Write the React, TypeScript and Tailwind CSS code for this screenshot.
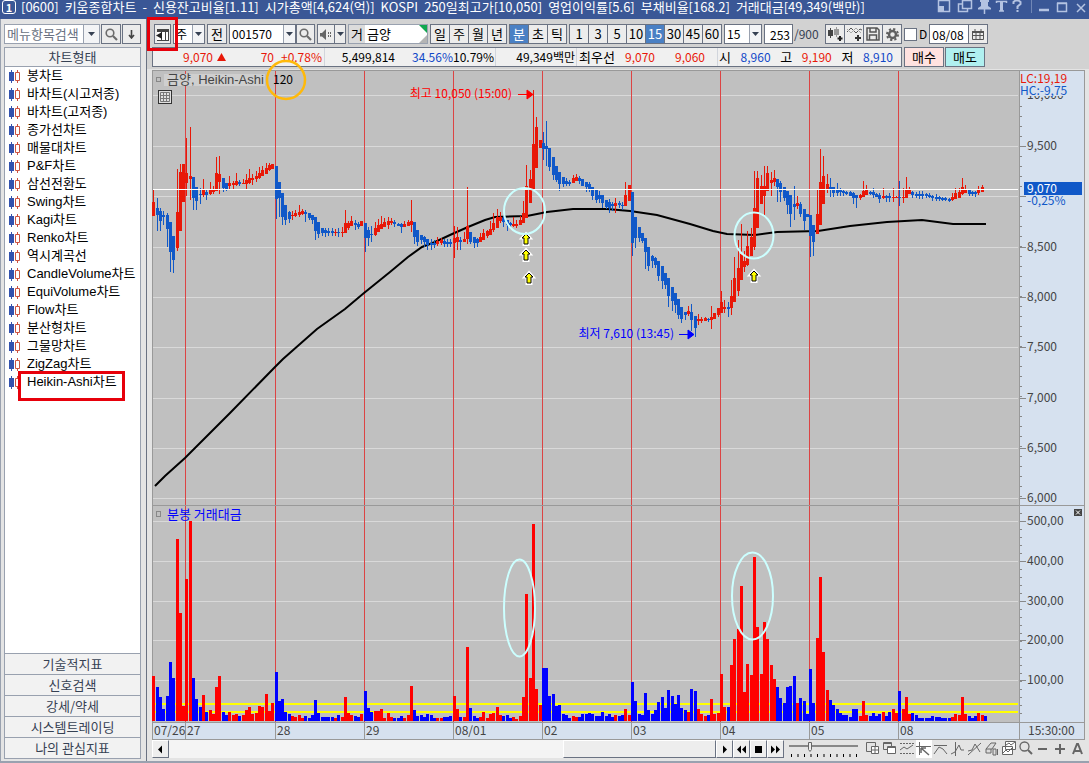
import { useState } from 'react'
import type { ReactNode } from 'react'

const TITLE_PARTS = [
  '[0600]', '키움종합차트', '-', '신용잔고비율[1.11]', '시가총액[4,624(억)]', 'KOSPI',
  '250일최고가[10,050]', '영업이익률[5.6]', '부채비율[168.2]', '거래대금[49,349(백만)]',
]

const CHART_TYPES = [
  '봉차트', '바차트(시고저종)', '바차트(고저종)', '종가선차트', '매물대차트', 'P&F차트',
  '삼선전환도', 'Swing차트', 'Kagi차트', 'Renko차트', '역시계곡선', 'CandleVolume차트',
  'EquiVolume차트', 'Flow차트', '분산형차트', '그물망차트', 'ZigZag차트', 'Heikin-Ashi차트',
]

const SIDE_TABS = ['기술적지표', '신호검색', '강세/약세', '시스템트레이딩', '나의 관심지표']

const DAYS = [
  { x: 185, label: '27' },
  { x: 275, label: '28' },
  { x: 364, label: '29' },
  { x: 453, label: '08/01' },
  { x: 542, label: '02' },
  { x: 631, label: '03' },
  { x: 720, label: '04' },
  { x: 809, label: '05' },
  { x: 898, label: '08' },
]

const PRICE_GRID = [
  { y: 95, label: '10,000' },
  { y: 146, label: '9,500' },
  { y: 196, label: '' },
  { y: 247, label: '8,500' },
  { y: 297, label: '8,000' },
  { y: 347, label: '7,500' },
  { y: 398, label: '7,000' },
  { y: 448, label: '6,500' },
  { y: 498, label: '6,000' },
]

const VOLUME_GRID = [
  { y: 521, label: '500,00' },
  { y: 561, label: '400,00' },
  { y: 601, label: '300,00' },
  { y: 640, label: '200,00' },
  { y: 680, label: '100,00' },
]

// colour, high, body top, body bottom, low
const CANDLES = `
r190,202,216,216 b198,208,215,231 b208,211,221,231 b211,215,217,225 b213,215,229,247 b222,222,252,272
b236,236,260,273 r169,212,248,251 r164,172,231,231 r164,164,202,202 r138,173,183,196 r127,176,179,200
b177,177,198,210 b187,187,201,210 b188,194,195,204 r179,190,195,197 b190,192,195,200 r182,190,194,195
r186,189,192,194 r157,173,191,191 r156,174,182,194 b178,178,188,192 b183,183,189,191 r176,183,186,189
r181,183,185,189 r173,181,185,186 b180,182,184,186 r179,183,184,184 r174,180,184,189 r169,178,183,184
r174,178,180,185 r171,176,179,182 r167,173,178,179 r166,170,176,176 r163,168,174,174 r163,165,170,171
r164,164,169,169 b166,166,199,219 b182,182,198,217 b193,193,217,225 b205,205,220,225 b211,212,219,223
r211,215,216,220 r210,213,216,217 r205,212,215,217 r209,211,214,215 b210,212,214,222 b213,213,218,220
b215,215,220,224 b217,217,231,240 b222,222,234,238 b228,228,233,236 b228,230,233,237 b228,231,233,236
b228,231,233,236 r229,232,233,236 b228,232,233,237 r227,232,233,237 r210,223,233,233 r221,223,228,230
r216,221,226,226 b220,223,225,230 b222,224,227,229 r221,221,226,226 b223,223,238,252 b227,230,238,246
b226,234,235,242 r222,228,235,236 r219,225,232,232 r216,224,229,229 r218,222,227,227 r217,221,225,229
r218,221,223,225 b220,222,224,227 b223,224,226,226 b223,224,227,233 r221,224,227,227 r220,222,226,226
r200,221,225,232 b222,222,237,244 b230,230,242,246 b235,235,240,244 b236,237,242,247 b239,239,245,250
b239,243,245,250 b240,243,245,248 r237,241,244,246 r238,240,243,245 b239,241,244,247 b239,242,244,247
b239,242,244,247 r226,238,243,258 r227,237,242,250 b237,240,242,250 r232,239,242,242 r187,226,239,244
b232,232,242,244 b237,237,243,248 b238,239,243,247 r233,237,242,242 r229,233,240,240 r230,231,236,238
r221,229,235,235 r213,223,230,232 r209,217,228,228 r212,217,221,223 b216,218,222,227 b220,220,225,231
b222,223,225,229 r217,224,226,227 r220,224,226,228 r216,220,225,225 r201,213,223,223 r165,186,218,218
r170,179,203,203 r90,144,191,191 r117,127,168,168 r140,140,148,148 b132,143,149,160 b121,146,149,166
b148,148,167,171 b157,157,175,180 b166,166,180,182 b172,172,184,191 b177,177,184,187 b178,181,184,186
b180,182,184,186 r175,178,183,183 r174,177,181,181 b176,178,181,184 b179,179,186,186 b182,182,187,192
b182,184,189,192 b187,187,196,200 b190,190,200,203 b191,195,199,203 b195,195,203,208 b200,200,207,209
b199,202,208,213 b202,204,206,211 r198,203,206,213 b201,203,205,208 b202,205,206,210 r182,195,206,206
r185,185,201,201 b192,192,243,256 b217,217,238,248 b227,227,238,242 b233,233,241,243 b238,238,252,269
b247,247,266,271 b255,256,261,268 b257,258,265,268 b261,261,276,281 b266,266,281,289 b273,273,285,289
b278,278,296,307 b287,287,301,311 b293,293,305,313 b299,299,315,319 b307,307,319,323 b312,312,315,320
r306,311,314,316 b304,312,320,331 b316,316,328,337 r314,319,321,325 r317,319,321,323 r317,318,321,321
b318,319,320,322 r306,317,320,329 r313,313,319,319 r308,308,315,317 r291,302,313,313 r300,307,309,313
b302,307,309,317 r280,296,308,315 r257,278,302,302 r240,268,291,296 r224,254,280,280 r251,261,267,272
r231,246,265,266 r228,237,256,256 r171,208,247,250 r171,178,228,228 r175,186,204,204 r166,186,196,215
r166,173,191,191 r172,180,183,196 r170,178,182,186 b179,179,187,202 b181,183,192,202 b187,187,198,201
b191,191,205,214 b195,195,214,227 b186,204,207,220 r196,203,206,209 b202,204,214,217 b209,209,221,230
b214,214,217,217 b215,215,236,257 b225,225,242,256 r190,214,234,234 r149,182,225,225 r156,176,204,204
r174,184,189,193 b178,187,189,197 b187,187,193,197 b183,190,193,196 b188,190,192,196 b190,191,193,196
b191,192,194,195 b191,192,196,196 b192,193,198,204 b195,195,198,208 r194,195,198,200 r181,191,197,197
r185,190,195,195 b191,192,194,195 b188,192,195,198 b193,194,197,197 b193,195,199,203 r188,196,198,199
b195,196,198,202 b193,196,198,202 r188,197,198,202 r196,197,198,198 b181,197,198,206 r188,197,198,203
r177,189,198,198 r187,190,194,194 b191,192,195,198 b192,194,196,198 b191,194,196,199 b191,194,196,199
b193,194,196,198 b193,195,197,198 b195,196,198,201 b194,197,199,201 b196,197,199,201 b197,198,200,201
b197,198,200,201 b198,199,201,202 r193,197,200,201 r188,193,199,199 r188,192,198,198 r178,187,194,195
r185,189,193,193 b190,190,194,196 b191,192,194,196 b191,192,194,197 r186,190,193,195 r185,187,192,192
`.trim().split(/\s+/)

// colour, bar height
const VOLUMES = `
r45 b34 b24 b12 b25 b59 b43 r182 r108 r15 r142 r200 b43 b22 b14 r26 b9 r11 r7 r34 r45 b9 b6 r9 r6 r7 b5
r6 r11 r14 r7 r8 r15 r14 r27 r10 r18 b49 b20 b22 b9 b7 r5 r4 r6 r3 b5 b3 b6 b21 b8 b4 b4 b4 b4 r3 b6 r4
r24 r8 r6 b5 b4 r7 b30 b13 b9 r10 r10 r12 r3 r8 r4 b3 b3 b5 r3 r6 r35 b11 b5 b6 b4 b7 b6 b3 r3 r3 b4 b4
b5 r25 r12 b4 r4 r74 b13 b5 b3 r4 r9 r3 r7 r8 r14 r6 b5 b6 b3 r4 r2 r5 r24 r127 r43 r197 r32 r16 b53 b53
b25 b27 b15 b16 b7 b6 b3 r5 r4 b4 b7 b7 b8 b7 b5 b5 b9 b5 b7 b4 r6 b5 b6 r12 r6 b39 b20 b7 b6 b28 b11 b7
b11 b19 b24 b13 b31 b25 b17 b26 b13 b11 r9 b32 b30 r12 r7 r5 b6 r22 r7 r8 r47 r14 b14 r56 r82 r92 r135
r29 r57 r46 r164 r94 r47 r99 r82 r56 r42 b34 b23 b18 b34 b35 b45 r18 b23 b20 b7 b52 b18 r83 r144 r69 r31
b21 b16 b12 b8 b6 b6 b4 b12 b12 r5 r20 r6 b5 b8 b5 b7 r9 b5 b9 r12 r8 b30 r12 r24 r7 b8 b6 b3 b3 b3 b3
b5 b4 b4 b3 b3 b3 r4 r7 r6 r24 r7 b5 b3 b5 r8 r6 b5
`.trim().split(/\s+/)

const AVERAGE =
  '155,486 165,476 185,458 230,413 275,367 283,359 317,329 345,309 364,293 390,272 408,257 422,247 435,242 450,235 468,227 485,220 495,217 527,216 547,212 573,209 607,209 630,211 657,215 690,224 713,231 727,234 755,235 777,232 818,231 850,226 887,222 922,220 953,224 986,224'

const barX = (i: number) => Math.floor(152.95 + 3.3 * i)

const range = (from: number, to: number, step: number) => {
  const out: number[] = []
  for (let v = from; v <= to; v += step) out.push(v)
  return out
}

function Caret() {
  return (
    <svg width="7" height="4" viewBox="0 0 7 4" className="fill-gray-700">
      <path d="M0 0h7L3.5 4z" />
    </svg>
  )
}

function Combo({ label, value, className }: { label: string; value: string; className: string }) {
  return (
    <div className={`flex h-5 border border-gray-500 bg-white text-[12px] ${className}`}>
      <select aria-label={label} className="min-w-0 flex-1 appearance-none px-[2px] outline-none">
        <option>{value}</option>
      </select>
      <span className="pointer-events-none flex w-3 shrink-0 items-center justify-center border-l border-gray-400 bg-gray-100">
        <Caret />
      </span>
    </div>
  )
}

function ToolButton({ label, className = 'w-5', children }: { label: string; className?: string; children: ReactNode }) {
  return (
    <button
      aria-label={label}
      className={`flex h-5 shrink-0 items-center justify-center border border-gray-500 bg-[#ececec] ${className}`}
    >
      {children}
    </button>
  )
}

function Segments({ items, active, onPick }: { items: string[]; active: string; onPick: (v: string) => void }) {
  return (
    <div className="flex h-5 shrink-0 border-y border-r border-gray-500">
      {items.map((item) => (
        <button
          key={item}
          onClick={() => onPick(item)}
          className={`w-[19px] border-l border-gray-500 text-center ${item === active ? 'bg-[#4a80c4] text-white' : 'bg-[#ececec]'}`}
        >
          {item}
        </button>
      ))}
    </div>
  )
}

function SearchIcon() {
  return (
    <svg width="13" height="13" viewBox="0 0 13 13" fill="none" stroke="#6b6b6b" strokeWidth="1.6">
      <circle cx="5" cy="5" r="3.8" />
      <path d="M8 8l4 4" strokeWidth="2.2" />
    </svg>
  )
}

function TitleBar() {
  return (
    <header className="flex h-[19px] items-start bg-[#3a5796] pl-[2px] text-white">
      <span className="mr-1 flex h-[14px] w-[14px] shrink-0 items-center justify-center rounded-[3px] border border-white text-[11px] font-bold leading-none">
        1
      </span>
      <h1 className="ml-[1px] flex flex-1 gap-[6px] whitespace-nowrap text-[13px] leading-[14px]">
        {TITLE_PARTS.map((part) => (
          <span key={part}>{part}</span>
        ))}
      </h1>
      <svg width="152" height="16" viewBox="937 0 152 16" fill="none" stroke="#b4c3e2" strokeWidth="1.5" className="shrink-0">
        <path d="M938.500 0.500h11v11h-11z M942 5" />
        <path d="M938 6h6v6h-6z" fill="#b4c3e2" stroke="none" />
        <path d="M962.500 0.500h9v8h-9z M962 4h-3.500v7.500h9v-3" />
        <path d="M980 0h9v2h-1v4l3 2v1.500h-13V8l3-2V2h-1z" fill="#b4c3e2" stroke="none" />
        <path d="M984.500 9v5 M996.500 3V1.500h10V3 M1001.500 1v10 M999 11h5" />
        <path d="M1001.500 1v10" strokeWidth="3" />
        <path d="M1013.500 4V2l2-1.500h3l2 1.500v2l-3 2.500V9 M1017.500 10v2" strokeWidth="2" />
        <path d="M1031.500 0v13" stroke="#7187b6" strokeWidth="1" />
        <path d="M1039 10h10" strokeWidth="2.500" />
        <path d="M1057.500 3.500h9v8h-9z M1057 3h10" />
        <path d="M1077 4l8 8M1085 4l-8 8" />
      </svg>
    </header>
  )
}

function Sidebar() {
  const [selected, setSelected] = useState('Heikin-Ashi차트')
  return (
    <aside className="flex w-[147px] shrink-0 flex-col border-l border-r border-l-gray-400 border-r-gray-500 bg-[#e4e4e4] pb-[2px] pl-[3px] pr-[5px] pt-[5px]">
      <div className="flex h-5 justify-between">
        <div className="flex w-24 border border-gray-400 bg-white">
          <input
            aria-label="메뉴항목검색"
            placeholder="메뉴항목검색"
            className="w-20 min-w-0 pl-[2px] text-[13px] outline-none placeholder:text-gray-500"
          />
          <span className="flex w-4 shrink-0 items-center justify-center border-l border-gray-400 bg-gray-100">
            <Caret />
          </span>
        </div>
        <ToolButton label="검색">
          <SearchIcon />
        </ToolButton>
        <ToolButton label="아래로" className="w-[19px]">
          <svg width="7" height="9" viewBox="0 0 7 9" fill="none" stroke="#444" strokeWidth="1.6">
            <path d="M3.500 0v8M1 5l2.500 3L6 5" />
          </svg>
        </ToolButton>
      </div>

      <div className="mt-[3px] flex flex-1 flex-col border border-gray-400 bg-white">
        <h2 className="h-[19px] border-b border-gray-400 bg-[#f2f2f2] text-center text-[13px] leading-[18px] text-gray-700">
          차트형태
        </h2>
        <ul>
          {CHART_TYPES.map((name) => (
            <li key={name} className="relative h-[18px]">
              <button onClick={() => setSelected(name)} className="flex w-full items-center gap-[6px] whitespace-nowrap pl-1 text-left text-[13px] leading-[18px]">
                <svg width="12" height="13" viewBox="0 0 12 13" className="shrink-0">
                  <path d="M0 2h2V0h1v2h2v9H3v2H2v-2H0z" fill="#3352ae" />
                  <path d="M6.500 2.500h4v8h-4z M8.500 0v2.500 M8.500 10.500V13" fill="none" stroke="#cc5240" />
                </svg>
                <span className="font-['Liberation_Sans','Noto_Sans_CJK_KR',sans-serif]">{name}</span>
              </button>
              {name === selected && (
                <span className="pointer-events-none absolute -top-[2px] left-[13px] h-[30px] w-[107px] border-[3px] border-red-600" />
              )}
            </li>
          ))}
        </ul>
      </div>
      {SIDE_TABS.map((tab) => (
        <button key={tab} className="h-[21px] border border-t-0 border-gray-400 bg-[#f2f2f2] text-[13px] leading-5 text-gray-700">
          {tab}
        </button>
      ))}
    </aside>
  )
}

function Toolbar() {
  const [period, setPeriod] = useState('분')
  const [minutes, setMinutes] = useState('15')
  return (
    <div className="flex h-5 items-center gap-[2px] whitespace-nowrap text-[13px] leading-[18px]">
      <div className="relative ml-[2px]">
        <ToolButton label="메뉴 접기" className="w-[17px]">
          <svg width="13" height="13" viewBox="0 0 13 13" className="shrink-0">
            <path d="M1 1h12v12H1z" fill="#444" />
            <path d="M6 4h3v8H6z M10 4h2v8h-2z M1 4h4v8H1z" fill="#fff" />
            <path d="M6 4v7L0 7.500z" fill="#222" />
          </svg>
        </ToolButton>
        <span className="pointer-events-none absolute -inset-[7px] z-10 border-[3px] border-red-600" />
      </div>
      <Combo label="종목구분" value="주" className="w-8" />
      <ToolButton label="전">전</ToolButton>
      <Combo label="종목코드" value="001570" className="w-[67px]" />
      <ToolButton label="종목검색" className="-ml-[2px] w-[19px]">
        <SearchIcon />
      </ToolButton>
      <div className="flex">
        <ToolButton label="소리" className="w-[18px]">
          <svg width="13" height="11" viewBox="0 0 13 11" fill="#666">
            <path d="M0 4h2l4-4v11L2 7.500H0z M8 3h1v2H8z M8 6h1v2H8z M10 3h1v2h-1z M10 6h1v2h-1z" />
          </svg>
        </ToolButton>
        <ToolButton label="소리 설정" className="-ml-px w-[12px]">
          <Caret />
        </ToolButton>
      </div>
      <div className="flex h-5 w-20 border border-gray-400 bg-white">
        <button className="w-4 bg-[#dcdcdc]">거</button>
        <input aria-label="종목명" defaultValue="금양" className="w-10 min-w-0 flex-1 px-[2px] outline-none" />
        <svg width="8" height="18" viewBox="0 0 8 18" className="shrink-0">
          <path d="M0 0h8v8z" fill="#10a850" />
          <path d="M8 10v8H0z" fill="#b4b4b4" />
        </svg>
      </div>
      <Segments items={['일', '주', '월', '년']} active={period} onPick={setPeriod} />
      <Segments items={['분', '초', '틱']} active={period} onPick={setPeriod} />
      <Segments items={['1', '3', '5', '10', '15', '30', '45', '60']} active={minutes} onPick={setMinutes} />
      <Combo label="주기" value="15" className="w-[38px]" />
      <label className="flex items-center text-[12px]">
        <input aria-label="조회개수" defaultValue="253" className="h-5 w-[29px] border border-gray-500 bg-white pr-[2px] text-right outline-none" />
        <span className="w-[30px] pl-px text-gray-700">/900</span>
      </label>
      <div className="flex">
        <ToolButton label="봉 추가">
          <svg width="15" height="15" viewBox="0 0 15 15">
            <path d="M0 3h2V1h1v2h2v6H3v2H2V9H0z" fill="#444" />
            <path d="M6 2h2V0h1v2h2v6H9v2H8V8H6z" fill="#999" />
            <path d="M12 9v5M9.500 11.500h5" stroke="#222" strokeWidth="2" />
          </svg>
        </ToolButton>
        <ToolButton label="지표 추가" className="-ml-px w-5">
          <svg width="15" height="15" viewBox="0 0 15 15" fill="none">
            <path d="M0 5l4-4 5 5 4-4 2 1" stroke="#555" />
            <path d="M0 2l4 4 5-5 5 5" stroke="#aaa" />
            <path d="M11 8v6M8 11h6" stroke="#333" strokeWidth="2" />
          </svg>
        </ToolButton>
        <ToolButton label="저장" className="-ml-px w-5">
          <svg width="14" height="14" viewBox="0 0 14 14" fill="none" stroke="#555" strokeWidth="1.500">
            <path d="M1 1h10l2 2v10H1z M4 1v4h6V1 M3.500 13V8h7v5" />
          </svg>
        </ToolButton>
        <ToolButton label="설정" className="-ml-px w-5">
          <svg width="13" height="13" viewBox="0 0 13 13" fill="none" stroke="#606060">
            <circle cx="6.500" cy="6.500" r="3.500" strokeWidth="2.500" />
            <circle cx="6.500" cy="6.500" r="5.500" strokeWidth="2" strokeDasharray="2.200 2.120" />
          </svg>
        </ToolButton>
      </div>
      <label className="flex items-center gap-[2px] text-[12px]">
        <input type="checkbox" className="h-[13px] w-[13px] appearance-none border border-gray-500 bg-white" />D
      </label>
      <div className="flex text-[12px]">
        <input aria-label="날짜" defaultValue="08/08" className="h-5 w-10 border border-gray-500 bg-white px-[2px] outline-none" />
        <ToolButton label="달력" className="-ml-px w-5">
          <svg width="12" height="11" viewBox="0 0 12 11" fill="none" stroke="#555">
            <path d="M0.500 2.500h11v8H0.500z M4 2v9 M8 2v9 M0 6.500h12 M3 0v2 M9 0v2" />
            <path d="M0 3h12" strokeWidth="2" />
          </svg>
        </ToolButton>
      </div>
    </div>
  )
}

function QuoteRow() {
  return (
    <div className="mt-[3px] flex h-5 whitespace-nowrap text-[12px] leading-[18px]">
      <div className="flex w-[750px] border border-gray-500 bg-[#f0f0f0] text-right">
        <div className="flex w-[172px] items-center border-r border-gray-300 pr-[2px] text-[#e81808]">
          <span className="w-[60px]">9,070</span>
          <svg width="9" height="8" viewBox="0 0 9 8" className="ml-1 fill-[#e81808]">
            <path d="M4.500 0L9 8H0z" />
          </svg>
          <span className="ml-auto">70</span>
          <span className="w-12">+0.78%</span>
        </div>
        <div className="flex w-[171px] border-r border-gray-300 pr-[2px]">
          <span className="w-[70px]">5,499,814</span>
          <span className="w-[58px] text-[#1048c8]">34.56%</span>
          <span className="w-10">10.79%</span>
        </div>
        <span className="w-[81px] border-r border-gray-300 pr-[1px]">49,349백만</span>
        <div className="flex w-[141px] border-r border-gray-300 pl-[2px] text-[#e81808]">
          <span className="w-9 text-left text-[13px] text-black">최우선</span>
          <span className="w-10">9,070</span>
          <span className="w-[50px]">9,060</span>
        </div>
        <div className="flex flex-1 justify-between pl-[1px] pr-2 text-[#1048c8]">
          <span className="text-[13px] text-black">시</span>
          <span>8,960</span>
          <span className="text-[13px] text-black">고</span>
          <span className="text-[#e81808]">9,190</span>
          <span className="text-[13px] text-black">저</span>
          <span>8,910</span>
        </div>
      </div>
      <button className="ml-[2px] w-10 border border-gray-500 bg-[#ffe2e0] text-[13px]">매수</button>
      <button className="ml-[1px] w-10 border border-gray-500 bg-[#b0f0f0] text-[13px]">매도</button>
    </div>
  )
}

function BuyArrow({ x, y }: { x: number; y: number }) {
  return (
    <g transform={`translate(${x} ${y})`}>
      <path d="M0 -6L5 -0.500H2.500V6H-2.500V-0.500H-5z" fill="#ff0" stroke="#fff" strokeWidth="2" />
      <path d="M0 -5L4 -1H2V5H-2V-1H-4z" fill="#ff0" stroke="#000" />
    </g>
  )
}

function Chart() {
  return (
    <svg viewBox="152 70 934 670" className="relative block w-full overflow-visible text-[12px]">
      <g shapeRendering="crispEdges">
        <rect x="152" y="70" width="933" height="670" fill="#999" />
        <rect x="153" y="71" width="866" height="651" fill="#c0c0c0" />
        <rect x="1020" y="71" width="64" height="651" fill="#d6e1ef" />
        <rect x="153" y="723" width="931" height="16" fill="#d6e1ef" />
        <rect x="1019" y="723" width="1" height="17" fill="#999" />

        {/* grid */}
        {[...PRICE_GRID, ...VOLUME_GRID].map((g) => (
          <g key={g.y}>
            <rect x="153" y={g.y} width="865" height="1" fill="#d9d9d9" />
            <rect x="1020" y={g.y} width="6" height="1" fill="#888" />
          </g>
        ))}
        {range(106, 498, 10).map((y) => (
          <rect key={y} x="1020" y={y} width="2" height="1" fill="#888" />
        ))}
        {range(513, 720, 8).map((y) => (
          <rect key={y} x="1020" y={y} width="2" height="1" fill="#888" />
        ))}
        <rect x="153" y="703" width="865" height="2" fill="#ff0" />
        <rect x="153" y="711" width="865" height="2" fill="#ff0" />
        {DAYS.map((d) => (
          <g key={d.x}>
            <rect x={d.x} y="71" width="1" height="651" fill="#dc4444" />
            <rect x={d.x} y="722" width="1" height="17" fill="#999" />
          </g>
        ))}
        <rect x="153" y="505" width="931" height="1" fill="#999" />
      </g>

      <polyline points={AVERAGE} fill="none" stroke="#000" strokeWidth="2" />

      <g shapeRendering="crispEdges">
        {CANDLES.map((c, i) => {
          const [high, top, bottom, low] = c.slice(1).split(',').map(Number)
          return (
            <g key={i} fill={c[0] === 'r' ? '#e81808' : '#1058c8'}>
              <rect x={barX(i) + 1} y={high} width="1" height={low - high} />
              <rect x={barX(i)} y={top} width="3" height={Math.max(1, bottom - top)} />
            </g>
          )
        })}
        <rect x="153" y="189" width="865" height="1" fill="#fff" />
        {VOLUMES.map((v, i) => (
          <rect
            key={i}
            x={barX(i)}
            y={721 - Number(v.slice(1))}
            width="3"
            height={Number(v.slice(1))}
            fill={v[0] === 'r' ? '#ff0000' : '#0000ff'}
          />
        ))}
      </g>

      {/* price and volume scale */}
      <g fill="#444">
        {PRICE_GRID.map((g) => (
          <text key={g.y} x="1027" y={g.y + 4}>{g.label}</text>
        ))}
        {VOLUME_GRID.map((g) => (
          <text key={g.y} x="1027" y={g.y + 4}>{g.label}</text>
        ))}
        <text x="154" y="735">07/26</text>
        {DAYS.map((d) => (
          <text key={d.x} x={d.x + 2} y="735">{d.label}</text>
        ))}
        <text x="1028" y="735">15:30:00</text>
      </g>
      <rect x="1020" y="72" width="64" height="24" fill="#d6e1ef" />
      <text x="1020" y="83" fill="#e81808">LC:19,19</text>
      <text x="1020" y="95" fill="#1058c8">HC:-9,75</text>
      <rect x="1024" y="182" width="58" height="13" fill="#1058c8" />
      <text x="1027" y="193" fill="#fff">9,070</text>
      <text x="1027" y="205" fill="#1058c8">-0,25%</text>

      {/* panel titles */}
      <rect x="164" y="74" width="101" height="12" fill="#cfcfcf" />
      <rect x="156.5" y="77.5" width="4" height="4" fill="none" stroke="#888" />
      <text x="167" y="84" fill="#444" className="font-['Liberation_Sans','Noto_Sans_CJK_KR',sans-serif] text-[13px]">금양, Heikin-Ashi</text>
      <text x="273" y="84">120</text>
      <rect x="158.5" y="90.5" width="13" height="13" fill="#e0e0e0" stroke="#333" />
      <path d="M160.500 92.500h9v9h-9z M160.500 95.500h9 M160.500 98.500h9 M163.500 92.500v9 M166.500 92.500v9" fill="none" stroke="#777" />
      <rect x="156.5" y="511.500" width="4" height="5" fill="none" stroke="#888" />
      <text x="167" y="519" fill="#00f" className="text-[13px]">분봉 거래대금</text>
      <rect x="1074" y="509" width="8" height="7" fill="#444" />
      <path d="M1076 510.500l4 4M1080 510.500l-4 4" stroke="#fff" />

      {/* high and low callouts */}
      <text x="512" y="98" textAnchor="end" fill="#f00">최고 10,050 (15:00)</text>
      <path d="M518 94.500h10M527 90l6 4.500-6 4.500z" fill="#f00" stroke="#f00" />
      <text x="674" y="338" textAnchor="end" fill="#00f">최저 7,610 (13:45)</text>
      <path d="M679 334.500h10M688 330l6 4.500-6 4.500z" fill="#00f" stroke="#00f" />

      {/* markers */}
      <BuyArrow x={526} y={239} />
      <BuyArrow x={526} y={255} />
      <BuyArrow x={529} y={278} />
      <BuyArrow x={754} y={276} />
      <g fill="none" stroke="#ccffff" strokeWidth="2">
        <ellipse cx="524.500" cy="211" rx="20.500" ry="23" />
        <ellipse cx="754" cy="235.500" rx="19.500" ry="23" />
        <ellipse cx="519.500" cy="608" rx="15.500" ry="48.500" />
        <ellipse cx="752.500" cy="596" rx="20.500" ry="43.500" />
      </g>
      <circle cx="286" cy="80" r="19" fill="none" stroke="#ffb90a" strokeWidth="2.500" />
    </svg>
  )
}

function ScrollButton({ label, d }: { label: string; d: string }) {
  return (
    <button
      aria-label={label}
      className="flex h-full w-[17px] shrink-0 items-center justify-center border border-b-gray-500 border-l-white border-r-gray-500 border-t-white bg-[#eee]"
    >
      <svg width="9" height="9" viewBox="0 0 9 9">
        <path d={d} />
      </svg>
    </button>
  )
}

function BottomBar() {
  return (
    <div className="flex h-[18px] items-center">
      <ScrollButton label="왼쪽" d="M6 0.500v8L2 4.500z" />
      <div className="flex h-full flex-1 justify-end bg-[#f4f4f4]">
        <div className="w-[153px] border border-b-gray-500 border-l-white border-r-gray-500 border-t-white bg-[#ededed]" />
      </div>
      <ScrollButton label="오른쪽" d="M3 0.500v8L7 4.500z" />
      <ScrollButton label="뒤로" d="M4 0.500v8L0 4.500z M9 0.500v8L5 4.500z" />
      <ScrollButton label="정지" d="M1 1h7v7H1z" />
      <ScrollButton label="앞으로" d="M0 0.500v8L4 4.500z M5 0.500v8L9 4.500z" />
      <svg width="302" height="18" viewBox="784 741 302 18" fill="none" stroke="#666" className="shrink-0">
        <path d="M789 747h69" stroke="#888" strokeWidth="2" />
        <path d="M808.500 743.500h3v7l-1.500 2-1.500-2z" fill="#eee" />
        <path d="M791.500 755v3m6.500-3v3m6.500-3v3m6.500-3v3m6.500-3v3m6.500-3v3m6.500-3v3m6.500-3v3m6.500-3v3m6.500-3v3m6.500-3v3" stroke="#000" />
        <path d="M866.500 743.500h9v9h-9z" />
        <path d="M871.500 747.500h7v7h-7z M875 748v6 M872 751h6" fill="#fff" />
        <path d="M883.500 743.500h8v7h-8z M883 744.500h9" />
        <path d="M887.500 747.500h8v7h-8z M887 748.500h9" fill="#fff" />
        <path d="M900 744.500h14 M900 754.500h14" strokeDasharray="2 1" />
        <path d="M900 751l4-3 3 2 6-4" />
        <rect x="916" y="741" width="16" height="18" fill="#fff" stroke="none" />
        <path d="M919.500 743v13 M916 747.500h15" />
        <path d="M921 749l8 7 M921 749h5 M921 749v5" strokeWidth="1.500" />
        <path d="M934 746.500h13 M934 755l5-7 4 2 4 5" />
        <path d="M955.500 743v14 M951 755l4-2 4-7 2 5 3 0" />
        <path d="M968 756l13-12 M968 752l4-1 3-6 5 8" />
        <path d="M986 750l5-6h5l-4 6z M986 750v4h5v-4 M993 750h3v6h-3z M997.500 750v6" fill="#ddd" />
        <path d="M1005.500 742.500h10v8h-10z M1002.500 747.500h10v8h-10z" fill="#fff" />
        <path d="M1003 754l3-3 2 2 4-4 M1006 746l3-2 2 2 4-3" />
        <circle cx="1024.500" cy="747.500" r="4.500" strokeWidth="1.300" />
        <path d="M1028 751l4 4" strokeWidth="2" />
        <path d="M1038 750h9 M1055 750h10 M1060 745v10" strokeWidth="2" />
        <path d="M1073 755l4-10h1l4 10 M1074.500 752h6" strokeWidth="2" />
      </svg>
    </div>
  )
}

export default function App() {
  return (
    <div className="flex min-h-screen flex-col border-b-2 border-gray-400 bg-[#e4e4e4] font-['Noto_Sans_CJK_KR',sans-serif] text-black">
      <TitleBar />
      <div className="flex flex-1">
        <Sidebar />
        <main className="flex min-w-0 flex-1 flex-col">
          <div className="bg-[#d2d2d2] pb-[2px] pl-[5px] pt-[5px]">
            <Toolbar />
            <QuoteRow />
          </div>
          <div className="pl-[5px] pr-[3px] pt-px">
            <Chart />
            <BottomBar />
          </div>
        </main>
      </div>
    </div>
  )
}
